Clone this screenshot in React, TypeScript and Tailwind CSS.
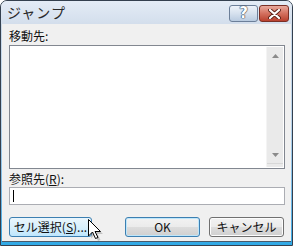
import React from 'react'

const jp = "font-['Noto_Sans_CJK_JP','Noto_Sans',sans-serif]"

function Cursor() {
  return (
    <svg className="absolute left-[87px] top-[218px]" width="16" height="24" viewBox="0 0 16 24">
      <path d="M1.5 1.5 L1.5 18 L5.5 14 L8.5 20.5 L11 19.5 L8 13.5 L13.5 13.5 Z" fill="#000" opacity="0.18" transform="translate(1.5 1.5)" />
      <path d="M0.5 0.5 L0.5 17 L4.5 13 L7.5 19.5 L10 18.5 L7 12.5 L12.5 12.5 Z" fill="#fff" stroke="#000" strokeWidth="1" strokeLinejoin="miter" />
    </svg>
  )
}

function Scrollbar() {
  return (
    <div className="w-[17px] h-full bg-[#eaeaea] border-l border-[#f4f4f4] flex flex-col items-center">
      <div className="h-[17px] w-full flex items-center justify-center">
        <svg width="7" height="4" viewBox="0 0 7 4"><path d="M3.5 0 L7 4 L0 4 Z" fill="#8a8a8a" /></svg>
      </div>
      <div className="flex-1" />
      <div className="h-[17px] w-full flex items-center justify-center">
        <svg width="7" height="4" viewBox="0 0 7 4"><path d="M0 0 L7 0 L3.5 4 Z" fill="#8a8a8a" /></svg>
      </div>
      <div className="h-[4px] w-full border-t border-[#d8d8d8]" />
    </div>
  )
}

export default function App() {
  return (
    <div className={`relative w-[293px] h-[246px] bg-gradient-to-b from-[#cfdbe9] via-[#b8d3ea] to-[#2fa9e6] border border-[#34404f] rounded-t-[7px] flex flex-col ${jp}`}>
      {/* title bar */}
      <div className="h-[23px] flex items-start rounded-t-[6px] bg-gradient-to-b from-[#e4ecf6] to-[#d3deec] pl-[6px] pr-[3px]">
        <span className="text-[14px] leading-[22px] text-[#2a2a2a] tracking-[1px]">ジャンプ</span>
        <div className="ml-auto mt-[4px] flex gap-[1px]">
          <div className="w-[29px] h-[17px] rounded-[3px] border border-[#6c7f99] bg-gradient-to-b from-[#eef3fa] via-[#d6e1ee] to-[#b9cbe0] flex items-center justify-center">
            <span className="text-[15px] leading-none font-bold text-white font-['DejaVu_Sans',sans-serif] [text-shadow:0_0_1px_#2b3a50,0_0_1px_#2b3a50,0_0_1px_#2b3a50]">?</span>
          </div>
          <div className="w-[30px] h-[17px] rounded-[3px] border border-[#7a2f25] bg-gradient-to-b from-[#e9a99d] via-[#d3705f] to-[#b9402e] flex items-center justify-center">
            <svg width="13" height="10" viewBox="0 0 13 10">
              <path d="M2 1 L11 9 M11 1 L2 9" stroke="#5b2218" strokeWidth="4" strokeLinecap="round" />
              <path d="M2 1 L11 9 M11 1 L2 9" stroke="#fff" strokeWidth="2.2" strokeLinecap="round" />
            </svg>
          </div>
        </div>
      </div>

      {/* client area */}
      <div className="mx-[1px] mb-[3px] flex-1 bg-[#f0f0f0] border-b border-[#4a5a6a] pl-[7px] pr-[6px] pt-[4px] flex flex-col">
        <div className="h-[17px] text-[12px] leading-[16px] text-[#111]">移動先:</div>
        <div className="h-[124px] border border-[#828790] bg-white flex justify-end p-[1px]">
          <Scrollbar />
        </div>
        <div className="h-[18px] text-[12px] leading-[20px] text-[#111]">
          参照先(<span className="underline">R</span>):
        </div>
        <div className="h-[18px] border border-[#abadb3] bg-white flex items-center pl-[3px]">
          <div className="w-[1px] h-[12px] bg-black" />
        </div>
        <div className="mt-[12px] flex text-[12px] text-[#111]">
          <button className="w-[83px] h-[20px] rounded-[3px] border border-[#3c7fb1] bg-gradient-to-b from-[#eaf6fd] via-[#d9f0fc] to-[#bee6fd] leading-[18px]">
            セル選択(<span className="underline">S</span>)...
          </button>
          <button className="ml-auto w-[75px] h-[20px] rounded-[3px] border border-[#3c7fb1] bg-[linear-gradient(#f2f2f2_0%,#ebebeb_50%,#dddddd_50%,#cfcfcf_100%)] leading-[18px] shadow-[inset_0_0_0_1px_#bde6fb]">
            OK
          </button>
          <button className="ml-[9px] mr-[1px] w-[75px] h-[20px] rounded-[3px] border border-[#707070] bg-[linear-gradient(#f2f2f2_0%,#ebebeb_50%,#dddddd_50%,#cfcfcf_100%)] leading-[18px] shadow-[inset_0_0_0_1px_#fcfcfc]">
            キャンセル
          </button>
        </div>
      </div>
      <Cursor />
    </div>
  )
}
